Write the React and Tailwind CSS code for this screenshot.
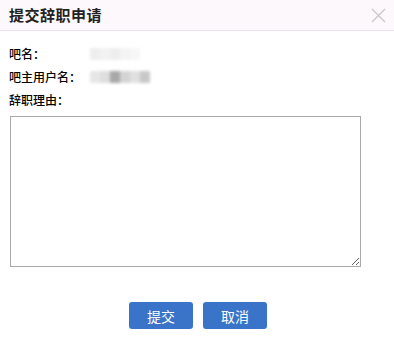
import React from "react";

const font = { fontFamily: '"Noto Sans CJK SC", "Noto Sans", sans-serif' };

const Blur = ({ blocks }) => (
  <div className="flex items-center h-[12px] blur-[1.5px]">
    {blocks.map((c, i) => (
      <span key={i} className={`h-[12px] w-[10px] ${c}`} />
    ))}
  </div>
);

export default function App() {
  return (
    <div className="w-[394px] h-[337px] bg-white text-black" style={font}>
      {/* Header */}
      <div className="h-[31px] bg-[#fcf8fc] border-b border-[#ece4ec] flex items-center justify-between pl-[9px] pr-[8px]">
        <h1 className="text-[15px] font-bold tracking-[0.5px] text-[#222]">提交辞职申请</h1>
        <svg width="15" height="15" viewBox="0 0 15 15" className="text-[#c8c4c8]">
          <path d="M1 1 L14 14 M14 1 L1 14" stroke="currentColor" strokeWidth="1.2" />
        </svg>
      </div>

      {/* Body */}
      <div className="pl-[9px] pt-[11px] text-[12px] font-medium">
        <div className="flex items-center h-[23px]">
          <span className="w-[81px]">吧名：</span>
          <Blur blocks={["bg-[#eeeeee]", "bg-[#f2f2f2]", "bg-[#eeeeee]", "bg-[#f4f4f4]", "bg-[#f7f7f7]"]} />
        </div>
        <div className="flex items-center h-[23px]">
          <span className="w-[81px]">吧主用户名：</span>
          <Blur blocks={["bg-[#e6e6e6]", "bg-[#dedede]", "bg-[#a8a8a8]", "bg-[#d4d4d4]", "bg-[#e0e0e0]", "bg-[#c8c8c8]"]} />
        </div>
        <div className="flex items-center h-[23px]">
          <span>辞职理由：</span>
        </div>
        <textarea className="mt-[5px] ml-[1px] block w-[351px] h-[151px] border border-[#a9a9a9] outline-none resize" />
      </div>

      {/* Buttons */}
      <div className="flex justify-center gap-[10px] mt-[35px] pl-[2px]">
        <button className="w-[64px] h-[27px] rounded-[3px] bg-[#3a74c8] text-white text-[14px] leading-none">
          提交
        </button>
        <button className="w-[64px] h-[27px] rounded-[3px] bg-[#3a74c8] text-white text-[14px] leading-none">
          取消
        </button>
      </div>
    </div>
  );
}
